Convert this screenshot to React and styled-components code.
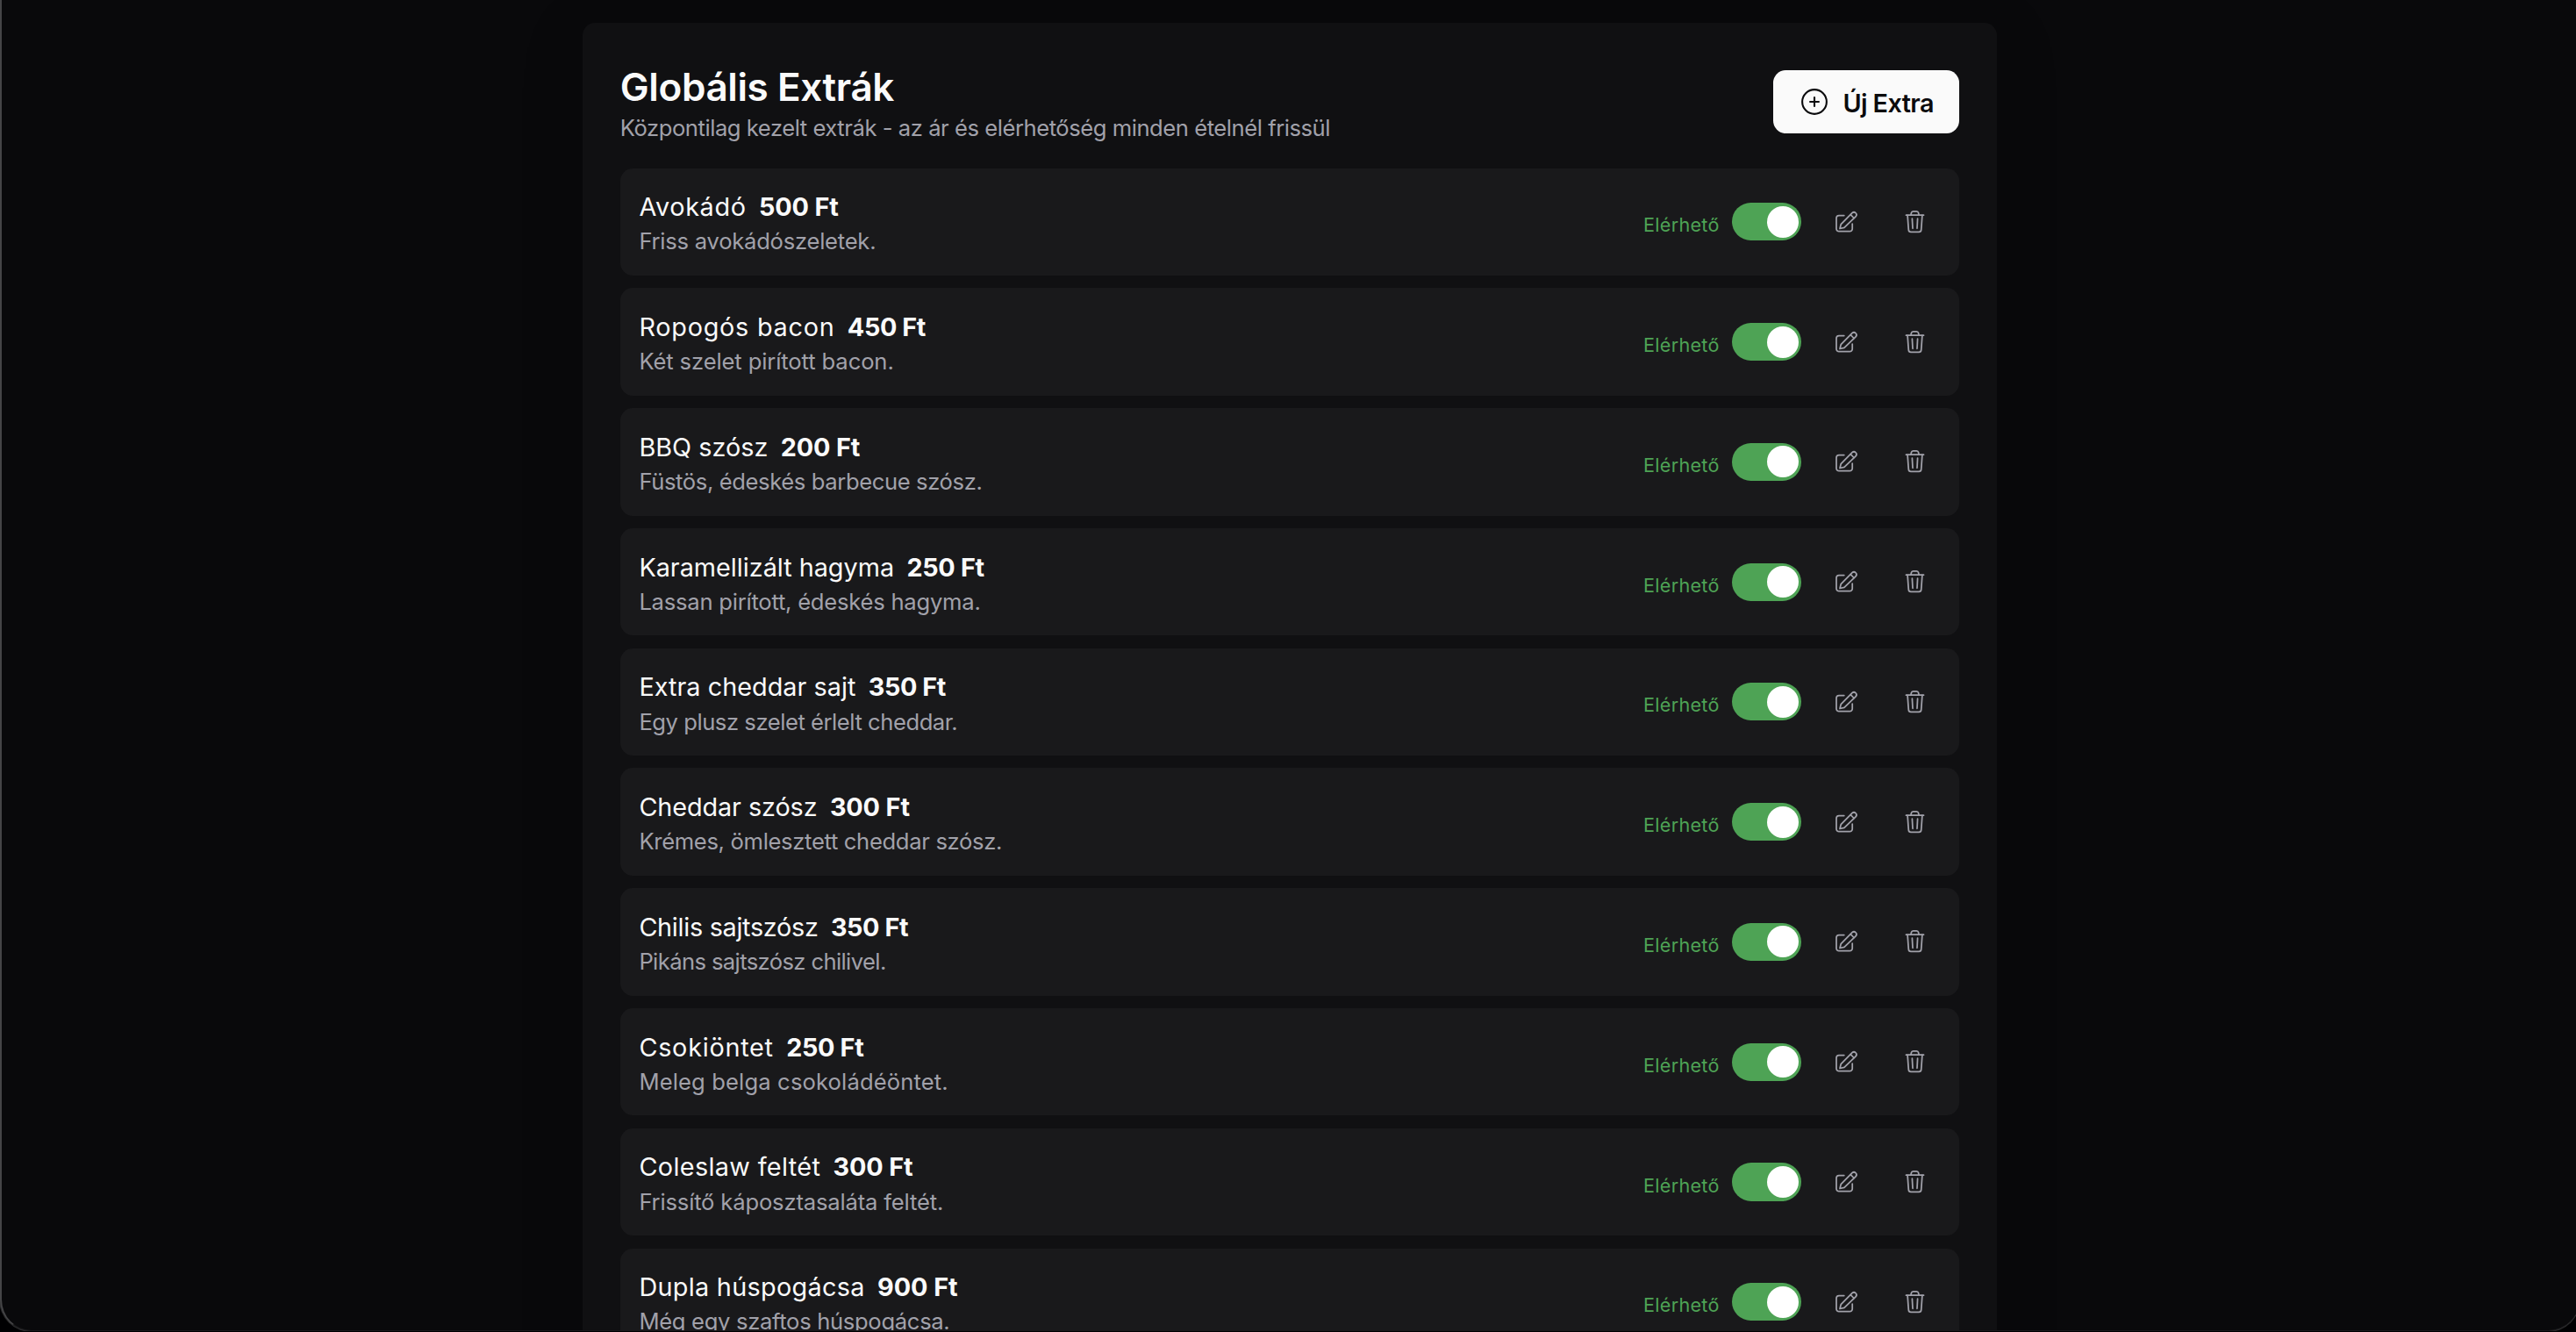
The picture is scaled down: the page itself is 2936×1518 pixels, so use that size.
import React, { useState } from 'react'
import styled, { createGlobalStyle } from 'styled-components'

const GlobalStyle = createGlobalStyle`
    * {
        box-sizing: border-box;
    }

    html {
        font-size: 28.8px;
    }

    body {
        margin: 0;
        background: #000002;
        color: #fafafa;
        font-family: Inter, 'Noto Sans', sans-serif;
        overflow: hidden;
    }

    h2, p {
        margin: 0;
    }
`

const Page = styled.main`
    width: 2940px;
    height: 1517px;
    padding-top: 26px;
    background: #09090b;
    border-left: 2px solid #454547;
    border-bottom: 1px solid #1a1a1c;
    border-radius: 0 0 36px 36px;
    display: flex;
    justify-content: center;
    align-items: flex-start;
    overflow: hidden;
    box-shadow: 0 0 0 1px #2c2c2e;
`

const Panel = styled.section`
    width: 56rem;
    margin-right: 2px;
    padding: 1.5rem;
    background: #101012;
    border-radius: 0.5rem;
    box-shadow: 0 10px 80px rgba(0, 0, 0, 0.1);
`

const Header = styled.header`
    display: flex;
    justify-content: space-between;
    align-items: center;
    margin-bottom: 1rem;
`

const Title = styled.h2`
    padding-top: 3px;
    font-size: 44px;
    font-weight: 600;
    line-height: 54.6px;
    letter-spacing: -0.389px;
`

const Subtitle = styled.p`
    padding-top: 1px;
    font-size: 25.6px;
    line-height: 35px;
    letter-spacing: -0.454px;
    color: #a1a1aa;
`

const AddButton = styled.button`
    display: flex;
    align-items: center;
    gap: 0.5rem;
    width: 212px;
    height: 2.5rem;
    padding: 0 1rem;
    border: none;
    border-radius: 0.5rem;
    background: #fafafa;
    color: #0b0b0d;
    font-family: inherit;
    font-size: 1rem;
    font-weight: 600;
    letter-spacing: -0.585px;
    white-space: nowrap;

    svg {
        width: 1.25rem;
        height: 1.25rem;
        flex-shrink: 0;
    }

    span {
        padding-top: 3px;
    }
`

const List = styled.div`
    display: grid;
    gap: 0.5rem;
`

const Row = styled.div`
    display: flex;
    justify-content: space-between;
    align-items: center;
    height: 4.25rem;
    padding: 0.75rem;
    background: #19191b;
    border-radius: 0.5rem;
`

const Info = styled.div`
    padding-top: 2px;
`

const NameLine = styled.div`
    display: flex;
    gap: 0.5rem;
    line-height: 1.5rem;
    white-space: nowrap;
`

const Name = styled.span`
    font-weight: 400;
    letter-spacing: ${({ $track }) => $track}px;
`

const Price = styled.span`
    font-weight: 700;
    letter-spacing: ${({ $track }) => $track}px;
`

const Description = styled.p`
    font-size: 25.6px;
    line-height: 1.25rem;
    letter-spacing: ${({ $track }) => $track}px;
    color: #a1a1aa;
    white-space: nowrap;
`

const Actions = styled.div`
    display: flex;
    align-items: center;
    gap: 0.75rem;
`

const Availability = styled.label`
    display: flex;
    align-items: center;
    gap: 0.5rem;
`

const Status = styled.span`
    margin-top: 7px;
    font-size: 0.75rem;
    letter-spacing: 0.275px;
    color: ${({ $on }) => ($on ? '#4ea355' : '#a1a1aa')};
`

const Switch = styled.button`
    display: flex;
    align-items: center;
    justify-content: ${({ $on }) => ($on ? 'flex-end' : 'flex-start')};
    width: 2.75rem;
    height: 1.5rem;
    padding: 0 3px;
    border: none;
    border-radius: 999px;
    background: ${({ $on }) => ($on ? '#4ea355' : '#3f3f46')};
`

const Knob = styled.span`
    width: 1.25rem;
    height: 1.25rem;
    border-radius: 50%;
    background: #fff;
`

const IconButton = styled.button`
    display: flex;
    align-items: center;
    justify-content: center;
    width: 2rem;
    height: 2rem;
    padding: 0;
    border: none;
    background: transparent;
    color: #a1a1aa;

    svg {
        width: 30px;
        height: 30px;
    }
`

const PlusCircleIcon = () => (
    <svg viewBox="0 0 24 24" fill="none" stroke="currentColor" strokeWidth="1.4" strokeLinecap="round">
        <circle cx="12" cy="12" r="9.25" />
        <path d="M12 8.7v6.6M8.7 12h6.6" />
    </svg>
)

const EditIcon = () => (
    <svg viewBox="0 0 30 30" fill="none" stroke="currentColor" strokeWidth="1.75" strokeLinecap="round" strokeLinejoin="round">
        <path d="M12.8 7.5H7A3 3 0 0 0 4 10.500V22.700a3 3 0 0 0 3 3h12.200a3 3 0 0 0 3-3V17" />
        <path d="M8 22.500l1.200-4.800L22 4.700A2.150 2.150 0 0 1 26 8.800L13 21.300z" />
        <path d="M20.200 6.700l3.800 3.800" />
    </svg>
)

const TrashIcon = () => (
    <svg viewBox="0.5 0.300 30 30" fill="none" stroke="currentColor" strokeWidth="1.75" strokeLinecap="round" strokeLinejoin="round">
        <path d="M5 7.500h20" />
        <path d="M10.400 7.400l.5-2.400a2.300 2.300 0 0 1 2.200-1.800h3.800a2.300 2.300 0 0 1 2.200 1.800l.5 2.400" />
        <path d="M6.600 7.600l1.200 16.600a2.700 2.700 0 0 0 2.700 2.500h9a2.700 2.700 0 0 0 2.700-2.500l1.200-16.600" />
        <path d="M11.900 11.400l.6 11.200M18.100 11.400l-.6 11.200" />
    </svg>
)

// track: letter spacing of name, price and description
const extras = [
    { name: 'Avokádó', price: 500, description: 'Friss avokádószeletek.', track: [0.65, -0.133, -0.242] },
    { name: 'Ropogós bacon', price: 450, description: 'Két szelet pirított bacon.', track: [0.75, -0.404, -0.113] },
    { name: 'BBQ szósz', price: 200, description: 'Füstös, édeskés barbecue szósz.', track: [0.02, -0.139, -0.387] },
    { name: 'Karamellizált hagyma', price: 250, description: 'Lassan pirított, édeskés hagyma.', track: [-0.01, -0.337, -0.236] },
    { name: 'Extra cheddar sajt', price: 350, description: 'Egy plusz szelet érlelt cheddar.', track: [0.03, -0.427, -0.453] },
    { name: 'Cheddar szósz', price: 300, description: 'Krémes, ömlesztett cheddar szósz.', track: [-0.09, -0.129, -0.326] },
    { name: 'Chilis sajtszósz', price: 350, description: 'Pikáns sajtszósz chilivel.', track: [-0.29, -0.427, -0.612] },
    { name: 'Csokiöntet', price: 250, description: 'Meleg belga csokoládéöntet.', track: [0.75, -0.337, 0.136] },
    { name: 'Coleslaw feltét', price: 300, description: 'Frissítő káposztasaláta feltét.', track: [0.36, -0.129, -0.169] },
    { name: 'Dupla húspogácsa', price: 900, description: 'Még egy szaftos húspogácsa.', track: [0.3, -0.052, -0.319] },
]

const ExtraRow = ({ extra }) => {
    const [on, setOn] = useState(true)
    const [nameTrack, priceTrack, descriptionTrack] = extra.track

    return (
        <Row>
            <Info>
                <NameLine>
                    <Name $track={nameTrack}>{extra.name}</Name>
                    <Price $track={priceTrack}>{`${extra.price} Ft`}</Price>
                </NameLine>
                <Description $track={descriptionTrack}>{extra.description}</Description>
            </Info>
            <Actions>
                <Availability>
                    <Status $on={on}>{on ? 'Elérhető' : 'Nem elérhető'}</Status>
                    <Switch type="button" role="switch" aria-checked={on} $on={on} onClick={() => setOn(!on)}>
                        <Knob />
                    </Switch>
                </Availability>
                <IconButton type="button"><EditIcon /></IconButton>
                <IconButton type="button"><TrashIcon /></IconButton>
            </Actions>
        </Row>
    )
}

const App = () => {
    return (
        <>
            <GlobalStyle />
            <Page>
                <Panel>
                    <Header>
                        <div>
                            <Title>Globális Extrák</Title>
                            <Subtitle>Központilag kezelt extrák - az ár és elérhetőség minden ételnél frissül</Subtitle>
                        </div>
                        <AddButton type="button">
                            <PlusCircleIcon />
                            <span>Új Extra</span>
                        </AddButton>
                    </Header>
                    <List>
                        {extras.map((extra) => (
                            <ExtraRow key={extra.name} extra={extra} />
                        ))}
                    </List>
                </Panel>
            </Page>
        </>
    )
}

export default App
